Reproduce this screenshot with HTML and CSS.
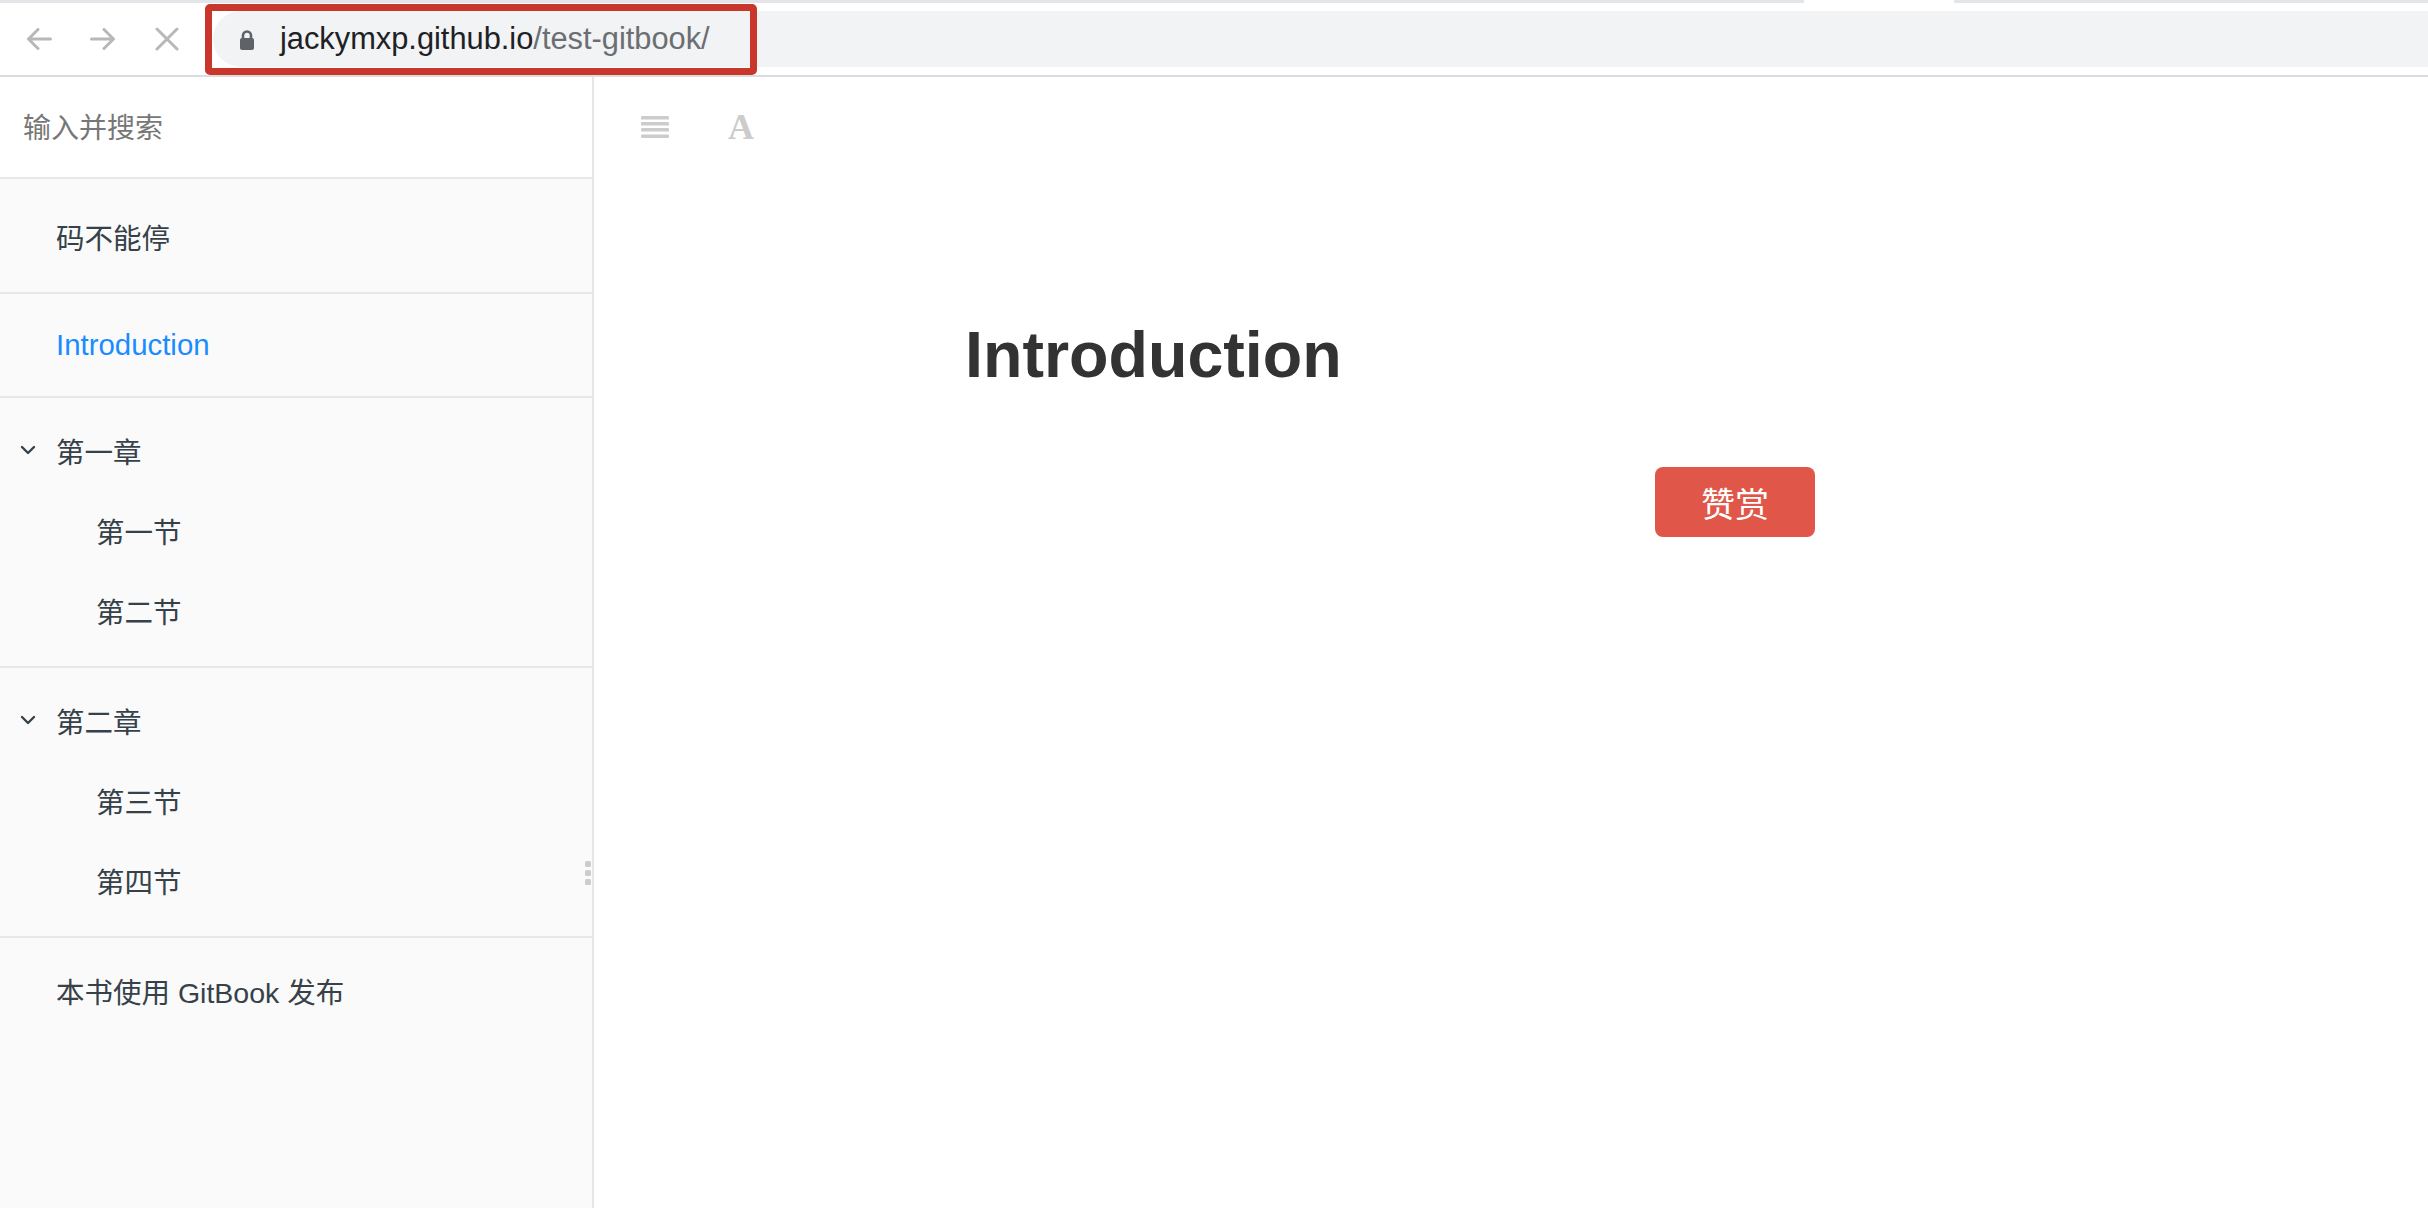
FILE: index.html
```html
<!DOCTYPE html>
<html lang="zh-CN">
<head>
<meta charset="utf-8">
<title>Introduction · GitBook</title>
<link rel="stylesheet" href="styles.css">
</head>
<body>
<div class="chrome">
  <div class="tabstrip"><div class="tab-gap"></div></div>
  <div class="toolbar">
    <div class="nav">
      <span class="nav-btn">
        <svg width="26" height="22" viewBox="0 0 26 22"><path d="M24.5 11H2.5M12 1.5L2.5 11L12 20.5" fill="none" stroke="#b8b8b8" stroke-width="3" stroke-linecap="round" stroke-linejoin="round"/></svg>
      </span>
      <span class="nav-btn">
        <svg width="26" height="22" viewBox="0 0 26 22"><path d="M1.5 11H23.5M14 1.5L23.5 11L14 20.5" fill="none" stroke="#b8b8b8" stroke-width="3" stroke-linecap="round" stroke-linejoin="round"/></svg>
      </span>
      <span class="nav-btn">
        <svg width="24" height="24" viewBox="0 0 24 24"><path d="M2 2L22 22M22 2L2 22" fill="none" stroke="#b8b8b8" stroke-width="3" stroke-linecap="round"/></svg>
      </span>
    </div>
    <div class="omnibox">
      <svg class="lock" width="16" height="21" viewBox="0 0 16 21"><path d="M4 10V6.5a4 4 0 0 1 8 0V10" fill="none" stroke="#5f6368" stroke-width="2.6"/><rect x="1" y="9" width="14" height="12" rx="2" fill="#5f6368"/></svg>
      <span class="host">jackymxp.github.io</span><span class="path">/test-gitbook/</span>
    </div>
  </div>
  <div class="annot"></div>
</div>
<div class="book">
  <aside class="summary">
    <div class="search">输入并搜索</div>
    <ul class="toc">
      <li class="row">码不能停</li>
      <li class="divider"></li>
      <li class="row active">Introduction</li>
      <li class="divider"></li>
      <li class="row chapter">
        <svg class="chev" width="16" height="10" viewBox="0 0 16 10"><path d="M2 2L8 8L14 2" fill="none" stroke="#364149" stroke-width="2.4" stroke-linecap="round" stroke-linejoin="round"/></svg>
        <span>第一章</span>
      </li>
      <li class="row sub">第一节</li>
      <li class="row sub">第二节</li>
      <li class="divider"></li>
      <li class="row chapter">
        <svg class="chev" width="16" height="10" viewBox="0 0 16 10"><path d="M2 2L8 8L14 2" fill="none" stroke="#364149" stroke-width="2.4" stroke-linecap="round" stroke-linejoin="round"/></svg>
        <span>第二章</span>
      </li>
      <li class="row sub">第三节</li>
      <li class="row sub">第四节</li>
      <li class="divider"></li>
      <li class="row">本书使用 GitBook 发布</li>
    </ul>
  </aside>
  <div class="resizer"><i></i><i></i><i></i></div>
  <main class="main">
    <div class="book-header">
      <svg class="menu" width="28" height="22" viewBox="0 0 28 22"><rect x="0" y="0" width="28" height="3.6" rx="1.2" fill="#cccccc"/><rect x="0" y="6" width="28" height="3.6" rx="1.2" fill="#cccccc"/><rect x="0" y="12" width="28" height="3.6" rx="1.2" fill="#cccccc"/><rect x="0" y="18.4" width="28" height="3.6" rx="1.2" fill="#cccccc"/></svg>
      <span class="font-btn">A</span>
    </div>
    <div class="page-inner">
      <h1>Introduction</h1>
      <div class="reward"><button class="reward-btn">赞赏</button></div>
    </div>
  </main>
</div>
</body>
</html>
```
FILE: styles.css
```css
* { box-sizing: border-box; }
html, body { margin: 0; padding: 0; }
body {
  width: 2428px;
  height: 1208px;
  overflow: hidden;
  background: #ffffff;
  position: relative;
  font-family: "Liberation Sans", "Noto Sans CJK SC", sans-serif;
}

/* browser chrome */
.chrome { position: relative; }
.tabstrip { height: 3px; background: #e3e5e8; display: flex; }
.tab-gap { margin-left: 1804px; width: 150px; background: #ffffff; }
.toolbar {
  height: 74px;
  border-bottom: 2px solid #dadce0;
  display: flex;
  align-items: center;
  padding-left: 19px;
}
.nav { display: flex; gap: 24px; }
.nav-btn {
  width: 40px;
  height: 40px;
  display: flex;
  align-items: center;
  justify-content: center;
}
.omnibox {
  flex: 1;
  margin-left: 26px;
  height: 56px;
  background: #f1f3f4;
  border-radius: 28px 0 0 28px;
  display: flex;
  align-items: center;
  padding-left: 26px;
  font-size: 30.8px;
  white-space: nowrap;
}
.lock { margin-right: 25px; flex: none; }
.host { color: #202124; }
.path { color: #6b6e72; }
.annot {
  position: absolute;
  left: 205px;
  top: 4px;
  width: 552px;
  height: 71px;
  border: 7px solid #c9372c;
  border-radius: 5px;
}

/* book */
.book { display: flex; height: 1131px; position: relative; }
.summary {
  width: 594px;
  flex: none;
  background: #fafafa;
  border-right: 2px solid #e6e6e6;
}
.search {
  height: 102px;
  background: #ffffff;
  border-bottom: 2px solid #e8e8e8;
  padding-left: 23px;
  padding-bottom: 2px;
  display: flex;
  align-items: center;
  font-family: "Noto Sans CJK SC", sans-serif;
  font-size: 28px;
  color: #777777;
}
.toc { list-style: none; margin: 0; padding: 19px 0 0; }
.row {
  height: 80px;
  display: flex;
  align-items: center;
  padding-left: 56px;
  padding-bottom: 4px;
  font-size: 28.5px;
  color: #364149;
}
.row.active { color: #1a8cff; height: 74px; padding-bottom: 0; font-size: 29.4px; }
.row.chapter { padding-left: 20px; gap: 20px; }
.row.sub { padding-left: 96px; }
.chev { flex: none; }
.divider { height: 2px; background: #e8e8e8; margin: 14px 0; }

.resizer {
  position: absolute;
  left: 585px;
  top: 784px;
  display: flex;
  flex-direction: column;
  gap: 3px;
}
.resizer i {
  display: block;
  width: 6px;
  height: 6px;
  border-radius: 1.5px;
  background: #cccccc;
}

.main { flex: 1; min-width: 0; overflow: hidden; }
.book-header {
  height: 100px;
  display: flex;
  align-items: center;
  padding-left: 47px;
}
.menu { flex: none; }
.font-btn {
  margin-left: 59px;
  font-family: "Liberation Serif", serif;
  font-weight: bold;
  font-size: 36px;
  line-height: 36px;
  color: #cccccc;
}
.page-inner {
  width: 1540px;
  margin-left: 371px;
  padding-top: 146px;
}
.page-inner h1 {
  margin: 0;
  font-size: 64.6px;
  line-height: 65px;
  font-weight: bold;
  color: #333333;
}
.reward { display: flex; justify-content: center; margin-top: 79px; }
.reward-btn {
  width: 160px;
  height: 70px;
  background: #e0574a;
  color: #ffffff;
  border: 0;
  border-radius: 8px;
  font-family: "Noto Sans CJK SC", sans-serif;
  font-size: 34px;
  padding: 0;
}
```
